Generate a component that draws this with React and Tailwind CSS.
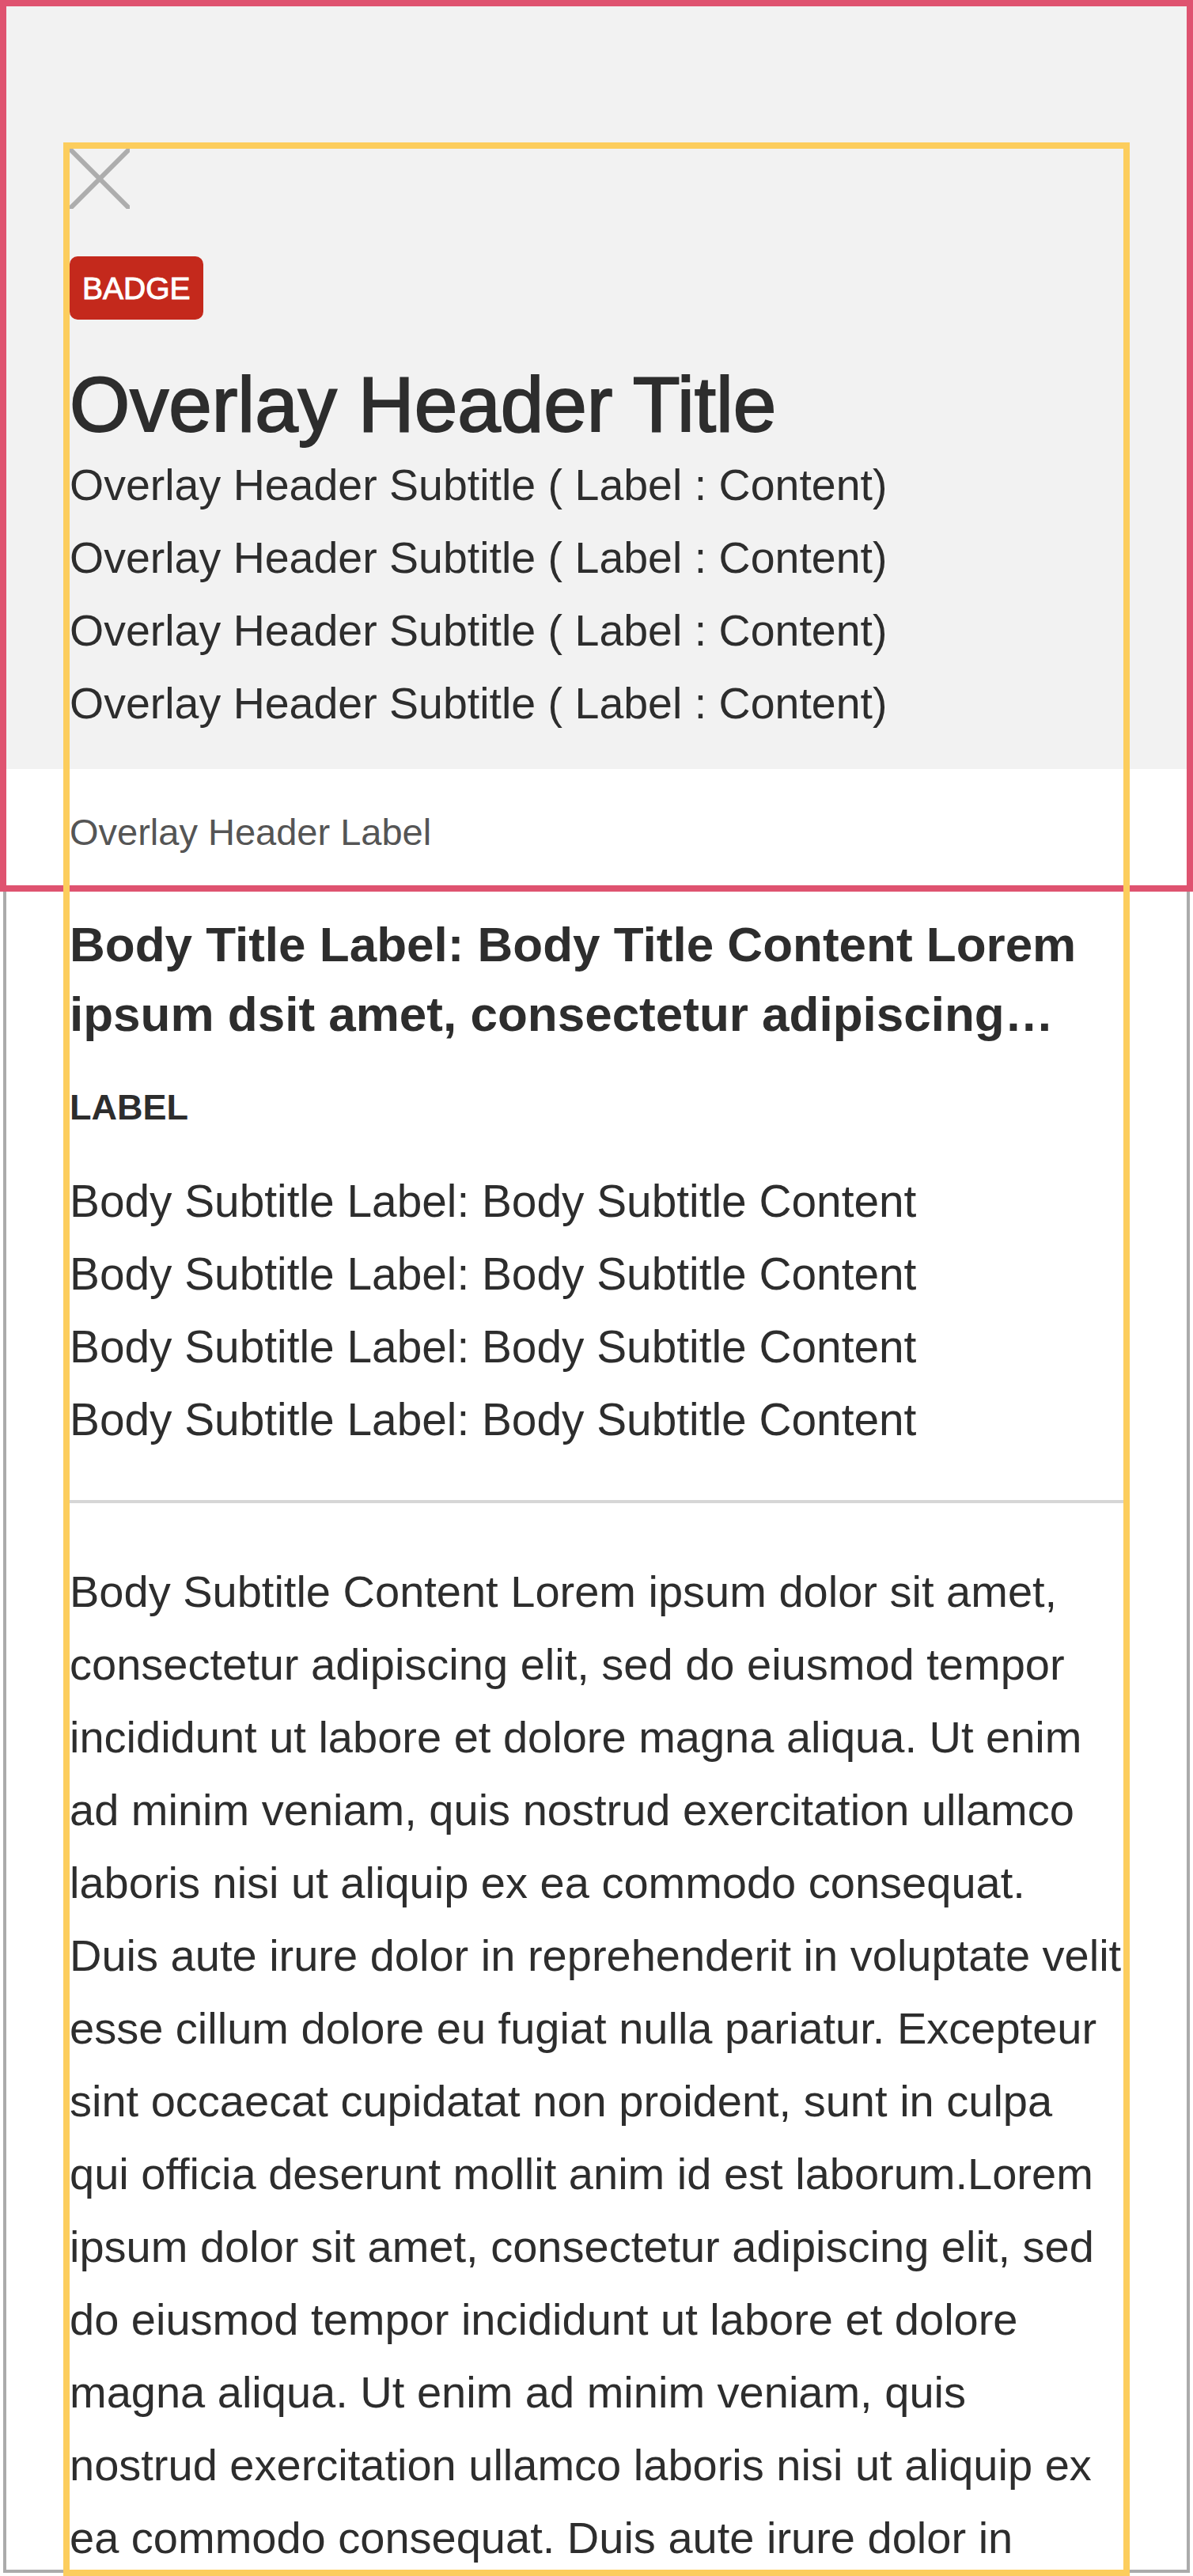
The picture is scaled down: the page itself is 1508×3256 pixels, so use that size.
import React from "react";

const headerSubtitles = [
  "Overlay Header Subtitle ( Label : Content)",
  "Overlay Header Subtitle ( Label : Content)",
  "Overlay Header Subtitle ( Label : Content)",
  "Overlay Header Subtitle ( Label : Content)",
];

const bodySubtitles = [
  "Body Subtitle Label: Body Subtitle Content",
  "Body Subtitle Label: Body Subtitle Content",
  "Body Subtitle Label: Body Subtitle Content",
  "Body Subtitle Label: Body Subtitle Content",
];

// lines kept as in the design so the wrap matches
const bodyLines = [
  "Body Subtitle Content Lorem ipsum dolor sit amet,",
  "consectetur adipiscing elit, sed do eiusmod tempor",
  "incididunt ut labore et dolore magna aliqua. Ut enim",
  "ad minim veniam, quis nostrud exercitation ullamco",
  "laboris nisi ut aliquip ex ea commodo consequat.",
  "Duis aute irure dolor in reprehenderit in voluptate velit",
  "esse cillum dolore eu fugiat nulla pariatur. Excepteur",
  "sint occaecat cupidatat non proident, sunt in culpa",
  "qui officia deserunt mollit anim id est laborum.Lorem",
  "ipsum dolor sit amet, consectetur adipiscing elit, sed",
  "do eiusmod tempor incididunt ut labore et dolore",
  "magna aliqua. Ut enim ad minim veniam, quis",
  "nostrud exercitation ullamco laboris nisi ut aliquip ex",
  "ea commodo consequat. Duis aute irure dolor in",
];

const CloseIcon = () => (
  <svg width="76" height="76" viewBox="0 0 76 76" fill="none">
    <path d="M0 0L76 76M76 0L0 76" stroke="#adadad" strokeWidth="6" />
  </svg>
);

const App = () => {
  return (
    <div className="relative h-[3256px] w-full overflow-hidden bg-white font-['Liberation_Sans',Arial,sans-serif] text-[#2d2d2d]">
      {/* Overlay header */}
      <header>
        <div className="bg-[#f2f2f2] px-[88px] pt-[188px] pb-[37px]">
          <button type="button" className="block h-[76px] w-[76px]">
            <CloseIcon />
          </button>
          <div className="mt-[60px] flex">
            <span className="flex h-[80px] items-center rounded-[10px] bg-[#c4291c] px-4 text-[39px] leading-none text-white [-webkit-text-stroke:1px_#ffffff]">
              BADGE
            </span>
          </div>
          <h1 className="mt-[51px] text-[98px] leading-[112px] [-webkit-text-stroke:2px_#2d2d2d]">
            Overlay Header Title
          </h1>
          <div>
            {headerSubtitles.map((line, i) => (
              <p key={i} className="text-[55.5px] leading-[92px] whitespace-nowrap">
                {line}
              </p>
            ))}
          </div>
        </div>
        <div className="px-[88px] pt-[52px] pb-[47px]">
          <p className="text-[47px] leading-[56px] text-[#555555]">Overlay Header Label</p>
        </div>
      </header>

      {/* Body */}
      <main className="px-[88px] pt-[23px]">
        <h2 className="line-clamp-2 text-[62px] font-bold leading-[88px]">
          Body Title Label: Body Title Content Lorem ipsum dsit amet, consectetur adipiscing…
        </h2>
        <p className="mt-[46px] text-[45px] font-bold leading-[56px]">LABEL</p>
        <div className="mt-[45px]">
          {bodySubtitles.map((line, i) => (
            <p key={i} className="text-[56.8px] leading-[92px] whitespace-nowrap">
              {line}
            </p>
          ))}
        </div>
        <div className="mt-[55px] h-[4px] bg-[#d6d6d6]" />
        <p className="mt-[66px] text-[56px] leading-[92px]">
          {bodyLines.map((line, i) => (
            <span key={i} className="block whitespace-nowrap">
              {line}
            </span>
          ))}
        </p>
      </main>

      {/* layout outlines */}
      <div className="pointer-events-none absolute inset-1 border-4 border-[#ababab]" />
      <div className="pointer-events-none absolute left-0 top-0 h-[1127px] w-full border-8 border-[#df5370]" />
      <div className="pointer-events-none absolute left-[80px] top-[180px] h-[3076px] w-[1348px] border-8 border-[#fccd5d]" />
    </div>
  );
};

export default App;
